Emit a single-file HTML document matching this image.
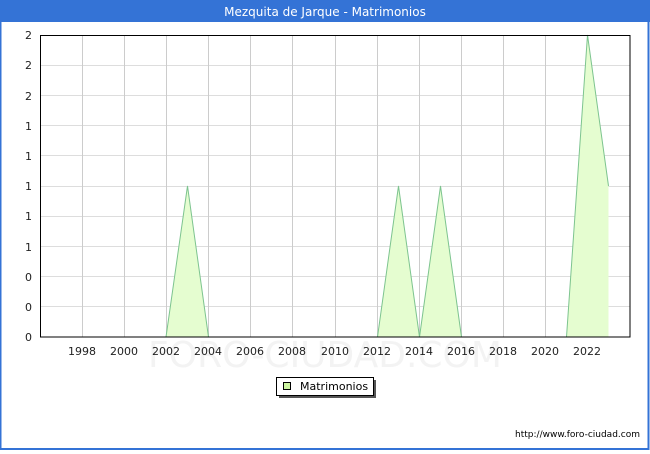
<!DOCTYPE html>
<html><head><style>
body{margin:0;width:650px;height:450px;overflow:hidden;background:#fff;font-family:"DejaVu Sans","Liberation Sans",sans-serif;}
</style></head><body>
<svg width="650" height="450" xmlns="http://www.w3.org/2000/svg" font-family="DejaVu Sans, Liberation Sans, sans-serif">
<rect x="0" y="0" width="650" height="450" fill="#fff"/>
<rect x="0.5" y="0.5" width="648" height="448.5" fill="none" stroke="#3473d6" stroke-width="2"/>
<rect x="0" y="0" width="650" height="22" fill="#3473d6"/>
<text x="325" y="16" font-size="12" fill="#fff" text-anchor="middle">Mezquita de Jarque - Matrimonios</text>
<text x="325" y="367" font-size="36" fill="#f3f3f3" text-anchor="middle">FORO-CIUDAD.COM</text>
<g stroke="#dddddd" stroke-width="1">
<line x1="40" y1="65.5" x2="630" y2="65.5"/><line x1="40" y1="95.5" x2="630" y2="95.5"/>
<line x1="40" y1="125.5" x2="630" y2="125.5"/><line x1="40" y1="155.5" x2="630" y2="155.5"/>
<line x1="40" y1="186.5" x2="630" y2="186.5"/><line x1="40" y1="216.5" x2="630" y2="216.5"/>
<line x1="40" y1="246.5" x2="630" y2="246.5"/><line x1="40" y1="276.5" x2="630" y2="276.5"/>
<line x1="40" y1="306.5" x2="630" y2="306.5"/>
</g>
<g stroke="#cccccc" stroke-width="1">
<line x1="82.5" y1="35" x2="82.5" y2="337"/><line x1="124.5" y1="35" x2="124.5" y2="337"/>
<line x1="166.5" y1="35" x2="166.5" y2="337"/><line x1="208.5" y1="35" x2="208.5" y2="337"/>
<line x1="250.5" y1="35" x2="250.5" y2="337"/><line x1="292.5" y1="35" x2="292.5" y2="337"/>
<line x1="335.5" y1="35" x2="335.5" y2="337"/><line x1="377.5" y1="35" x2="377.5" y2="337"/>
<line x1="419.5" y1="35" x2="419.5" y2="337"/><line x1="461.5" y1="35" x2="461.5" y2="337"/>
<line x1="503.5" y1="35" x2="503.5" y2="337"/><line x1="545.5" y1="35" x2="545.5" y2="337"/>
<line x1="587.5" y1="35" x2="587.5" y2="337"/>
</g>
<polygon points="166,337 187.5,186 208.5,337" fill="#e5fdd0"/>
<polyline points="166,337 187.5,186 208.5,337" fill="none" stroke="#7dc48f"/>
<polygon points="377.5,337 398.5,186 419.5,337 440.5,186 461.5,337" fill="#e5fdd0"/>
<polyline points="377.5,337 398.5,186 419.5,337 440.5,186 461.5,337" fill="none" stroke="#7dc48f"/>
<polygon points="566.5,337 587.5,35 608.5,186 608.5,337" fill="#e5fdd0"/>
<polyline points="566.5,337 587.5,35 608.5,186" fill="none" stroke="#7dc48f"/>
<rect x="40.5" y="35.5" width="589.5" height="301.5" fill="none" stroke="#000" stroke-width="1"/>
<g font-size="11" fill="#222" text-anchor="end">
<text x="32" y="39">2</text><text x="32" y="69">2</text><text x="32" y="100">2</text>
<text x="32" y="130">1</text><text x="32" y="160">1</text><text x="32" y="190">1</text>
<text x="32" y="220">1</text><text x="32" y="251">1</text><text x="32" y="281">0</text>
<text x="32" y="311">0</text><text x="32" y="341">0</text>
</g>
<g font-size="11" fill="#222" text-anchor="middle">
<text x="82" y="355">1998</text><text x="124" y="355">2000</text><text x="166" y="355">2002</text>
<text x="208" y="355">2004</text><text x="250" y="355">2006</text><text x="292" y="355">2008</text>
<text x="335" y="355">2010</text><text x="377" y="355">2012</text><text x="419" y="355">2014</text>
<text x="461" y="355">2016</text><text x="503" y="355">2018</text><text x="545" y="355">2020</text>
<text x="587" y="355">2022</text>
</g>
<rect x="279" y="380" width="97" height="18" fill="#555"/>
<rect x="276.5" y="377.5" width="97" height="18" fill="#fff" stroke="#000"/>
<rect x="283.5" y="382.5" width="7" height="7" fill="#ccf5a0" stroke="#000"/>
<text x="300" y="390" font-size="11" fill="#000">Matrimonios</text>
<text x="640" y="437" font-size="9" fill="#000" text-anchor="end">http://www.foro-ciudad.com</text>
</svg>
</body></html>
